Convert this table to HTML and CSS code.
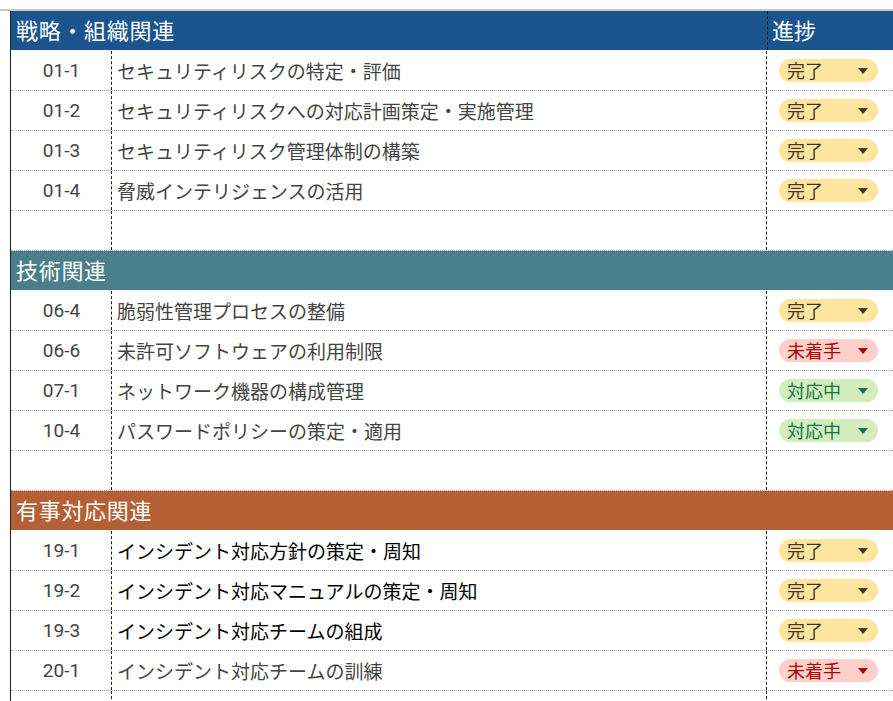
FILE: index.html
```html
<!DOCTYPE html>
<html lang="ja">
<head>
<meta charset="utf-8">
<title>進捗管理</title>
<link rel="stylesheet" href="styles.css">
</head>
<body>
<div class="sheet">
  <div class="table">
    <div class="row section blue">
      <div class="sec-title">戦略・組織関連</div>
      <div class="sec-status">進捗</div>
    </div>
    <div class="row"><div class="id">01-1</div><div class="name">セキュリティリスクの特定・評価</div><div class="status"><span class="chip done">完了<i class="caret"></i></span></div></div>
    <div class="row"><div class="id">01-2</div><div class="name">セキュリティリスクへの対応計画策定・実施管理</div><div class="status"><span class="chip done">完了<i class="caret"></i></span></div></div>
    <div class="row"><div class="id">01-3</div><div class="name">セキュリティリスク管理体制の構築</div><div class="status"><span class="chip done">完了<i class="caret"></i></span></div></div>
    <div class="row"><div class="id">01-4</div><div class="name">脅威インテリジェンスの活用</div><div class="status"><span class="chip done">完了<i class="caret"></i></span></div></div>
    <div class="row empty"><div class="id"></div><div class="name"></div><div class="status"></div></div>

    <div class="row section teal">
      <div class="sec-title">技術関連</div>
    </div>
    <div class="row"><div class="id">06-4</div><div class="name">脆弱性管理プロセスの整備</div><div class="status"><span class="chip done">完了<i class="caret"></i></span></div></div>
    <div class="row"><div class="id">06-6</div><div class="name">未許可ソフトウェアの利用制限</div><div class="status"><span class="chip todo">未着手<i class="caret"></i></span></div></div>
    <div class="row"><div class="id">07-1</div><div class="name">ネットワーク機器の構成管理</div><div class="status"><span class="chip doing">対応中<i class="caret"></i></span></div></div>
    <div class="row"><div class="id">10-4</div><div class="name">パスワードポリシーの策定・適用</div><div class="status"><span class="chip doing">対応中<i class="caret"></i></span></div></div>
    <div class="row empty"><div class="id"></div><div class="name"></div><div class="status"></div></div>

    <div class="row section brown">
      <div class="sec-title">有事対応関連</div>
    </div>
    <div class="row"><div class="id">19-1</div><div class="name dark">インシデント対応方針の策定・周知</div><div class="status"><span class="chip done">完了<i class="caret"></i></span></div></div>
    <div class="row"><div class="id">19-2</div><div class="name dark">インシデント対応マニュアルの策定・周知</div><div class="status"><span class="chip done">完了<i class="caret"></i></span></div></div>
    <div class="row"><div class="id">19-3</div><div class="name dark">インシデント対応チームの組成</div><div class="status"><span class="chip done">完了<i class="caret"></i></span></div></div>
    <div class="row"><div class="id">20-1</div><div class="name">インシデント対応チームの訓練</div><div class="status"><span class="chip todo">未着手<i class="caret"></i></span></div></div>
    <div class="row empty"><div class="id"></div><div class="name"></div><div class="status"></div></div>
  </div>
</div>
</body>
</html>
```

FILE: styles.css
```css
html, body {
  margin: 0;
  padding: 0;
  background: #ffffff;
  overflow: hidden;
}

body {
  font-family: Roboto, "Noto Sans CJK JP", sans-serif;
  color: #444444;
}

.sheet {
  margin-top: 9px;
  border-top: 2px solid #c8c8c8;
}

.table {
  margin-left: 10px;
  border-left: 1px solid #222222;
  display: flex;
  flex-direction: column;
}

.row {
  display: flex;
  height: 40px;
  box-sizing: border-box;
  border-bottom: 1px dotted #a8a8a8;
}

.id {
  width: 101px;
  flex: none;
  box-sizing: border-box;
  border-right: 1px dashed #1a1a1a;
  display: flex;
  align-items: center;
  justify-content: center;
  font-size: 19px;
  padding-left: 1px;
}

.name {
  width: 655px;
  flex: none;
  box-sizing: border-box;
  border-right: 1px dashed #1a1a1a;
  display: flex;
  align-items: center;
  padding-left: 5px;
  font-size: 19px;
  white-space: nowrap;
}

.name.dark {
  color: #000000;
}

.status {
  flex: 1;
  display: flex;
  align-items: center;
  padding-left: 12px;
}

.chip {
  width: 99px;
  height: 23px;
  box-sizing: border-box;
  border-radius: 12px;
  display: flex;
  align-items: center;
  justify-content: space-between;
  padding: 0 10px 0 8px;
  font-family: "Noto Sans CJK JP", sans-serif;
  font-size: 18px;
  line-height: 23px;
}

.chip.done {
  background: #ffe5a0;
  color: #473821;
}

.chip.todo {
  background: #ffcfc9;
  color: #b10202;
}

.chip.doing {
  background: #d4edbc;
  color: #11734b;
}

.caret {
  width: 0;
  height: 0;
  border-left: 5px solid transparent;
  border-right: 5px solid transparent;
  border-top: 6px solid currentColor;
}

.section {
  color: #ffffff;
  font-family: "Noto Sans CJK JP", sans-serif;
  font-size: 22px;
  border-bottom: 1px solid #ffffff;
}

.section.blue {
  background: #1a5590;
}

.section.teal {
  background: #4a7f8a;
}

.section.brown {
  background: #b45f35;
}

.sec-title {
  width: 756px;
  flex: none;
  box-sizing: border-box;
  padding: 0 0 4px 5px;
  letter-spacing: 0.7px;
  display: flex;
  align-items: center;
  white-space: nowrap;
}

.sec-status {
  flex: 1;
  border-left: 1px dashed #1a1a1a;
  padding: 0 0 4px 4px;
  display: flex;
  align-items: center;
}
```
